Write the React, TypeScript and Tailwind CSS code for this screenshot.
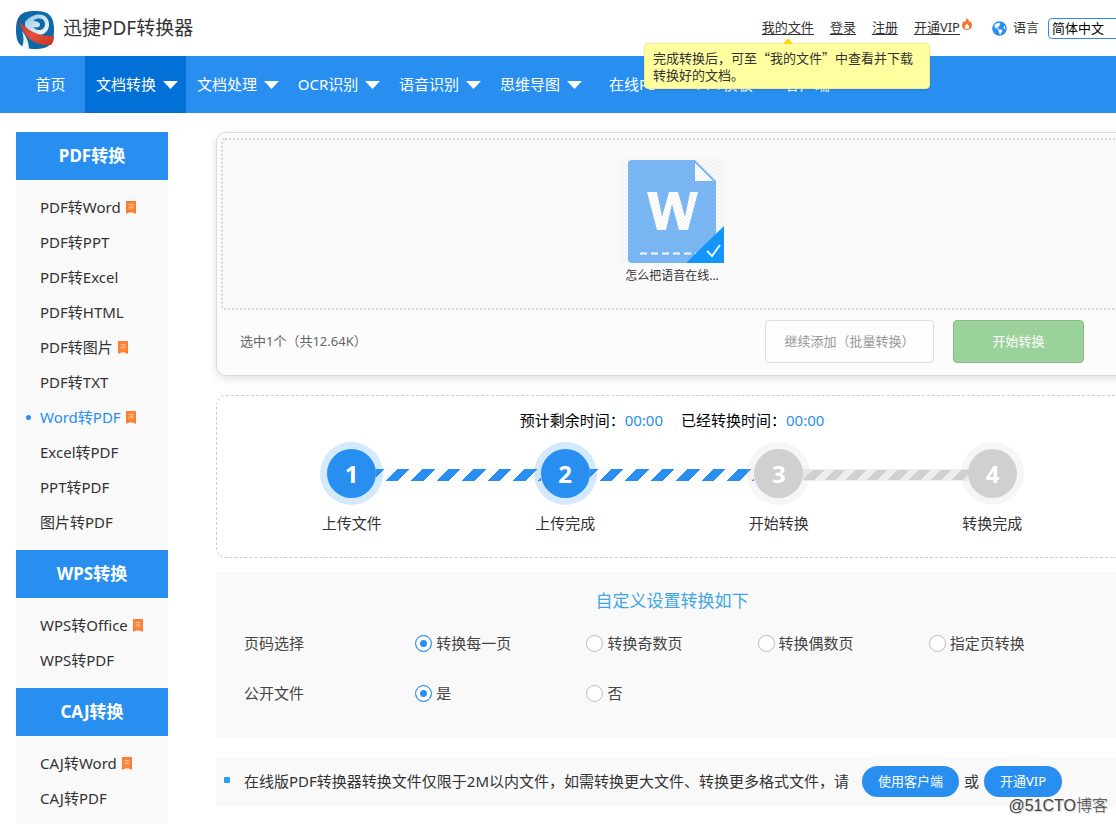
import { FaGlobeAmericas } from "react-icons/fa";

const navItems = ["文档转换", "文档处理", "OCR识别", "语音识别", "思维导图"];

const menu = [
  {
    title: "PDF转换",
    items: [
      { name: "PDF转Word", hot: true },
      { name: "PDF转PPT" },
      { name: "PDF转Excel" },
      { name: "PDF转HTML" },
      { name: "PDF转图片", hot: true },
      { name: "PDF转TXT" },
      { name: "Word转PDF", hot: true, active: true },
      { name: "Excel转PDF" },
      { name: "PPT转PDF" },
      { name: "图片转PDF" },
    ],
  },
  {
    title: "WPS转换",
    items: [{ name: "WPS转Office", hot: true }, { name: "WPS转PDF" }],
  },
  {
    title: "CAJ转换",
    items: [{ name: "CAJ转Word", hot: true }, { name: "CAJ转PDF" }],
  },
];

const steps = [
  { label: "上传文件", done: true },
  { label: "上传完成", done: true },
  { label: "开始转换", done: false },
  { label: "转换完成", done: false },
];

const settings = [
  { label: "页码选择", name: "pages", options: ["转换每一页", "转换奇数页", "转换偶数页", "指定页转换"] },
  { label: "公开文件", name: "public", options: ["是", "否"] },
];

function Logo() {
  return (
    <svg viewBox="0 0 38 38" className="mt-1 size-[38px] shrink-0" aria-hidden="true">
      <defs>
        <linearGradient id="swoosh" x1="0" y1="0" x2="1" y2="1">
          <stop offset="0" stopColor="#b93222" />
          <stop offset="0.5" stopColor="#e8503a" />
          <stop offset="1" stopColor="#c23221" />
        </linearGradient>
        <linearGradient id="ring" x1="0" y1="0" x2="1" y2="1">
          <stop offset="0" stopColor="#8cc6e6" />
          <stop offset="1" stopColor="#ffffff" />
        </linearGradient>
      </defs>
      <path d="M19 0C33 0 38 5 38 19S33 38 19 38 0 33 0 19 5 0 19 0Z" fill="#0d68a8" />
      <path d="M9 11C13 6 18 3.500 23 3.500c7 0 10 5 10 10C33 20 28 24 22 24c-5 0-10-4-13-9Z" fill="url(#ring)" />
      <path d="M17 10C19 8 21 7.500 23.500 7.500c4 0 5.500 3 5.500 6 0 3.500-3 5.500-6 5.500-2.500 0-4.500-1-5.500-3 4 1 6.500 0 6.500-2.500 0-2-3-3.500-7-3.500Z" fill="#0d68a8" />
      <path d="M6 20c4 5 7 11 7 18-3 0-5-.5-7-2C8 31 8 26 6 20Z" fill="#eaf5fc" />
      <path d="M2.500 9C9 17 18 25 38 25c0 4-1 7-3 9C20 35 8 28 2.500 9Z" fill="url(#swoosh)" />
    </svg>
  );
}

function Caret() {
  return (
    <svg viewBox="0 0 15 8" className="h-2 w-[15px] shrink-0" aria-hidden="true">
      <path d="M0 0h15L7.5 8Z" fill="currentColor" />
    </svg>
  );
}

function Flame() {
  return (
    <svg viewBox="0 0 10 12" className="mb-2 ml-0.5 h-3 w-2.5" aria-hidden="true">
      <path d="M4.500 0C7 1.500 7 3 7.300 4.200L8.300 3C9.400 4.500 10 6 10 7.300 10 10 8 12 5 12S0 10 0 7.300C0 5.500 1 4.500 1.600 3l1 1.300C3.500 3 4.700 2 4.500 0Z" fill="#f4772c" />
      <path d="M5.200 5.500c.3 1.500 2 2 2 3.500S6.300 11 5 11 2.800 10.200 2.800 9s1-1.500 2.400-3.500Z" fill="#fff" />
    </svg>
  );
}

function HotTag() {
  return (
    <svg viewBox="0 0 10 13" className="ml-[5px] h-[13px] w-2.5 shrink-0" aria-hidden="true">
      <path d="M0 0h10v13L8 12Q5 10.500 2 12L0 13Z" fill="#fb8034" />
      <path d="M2.500 3.500h5M4 2.700v1.500M6 2.700v1.500M4 5.200h3.500M3.200 5v3.500M4.500 6.500h3M6 6.500v2.300" stroke="#fff" strokeOpacity="0.7" strokeWidth="0.600" fill="none" />
    </svg>
  );
}

function WordFile() {
  return (
    <svg viewBox="0 0 104 104" className="size-[104px]" aria-hidden="true">
      <defs>
        <pattern id="checks" width="4" height="4" patternUnits="userSpaceOnUse">
          <path d="M0 0h2v2H0ZM2 2h2v2H2Z" fill="#000" fillOpacity="0.035" />
        </pattern>
      </defs>
      <path d="M12 1h63l21 21v82H12a4 4 0 0 1-4-4V5a4 4 0 0 1 4-4Z" fill="#7cb9f7" />
      <path d="M75 4v18h18Z" fill="#fff" />
      <path d="M27 33h10l5 25 7-25h9l7 25 5-25h8L68 71h-9l-7-26-6 26h-9Z" fill="#fff" />
      <path d="M20 94.500h56" stroke="#fff" strokeWidth="2" strokeDasharray="7 4" />
      <path d="M0 0h104v104H0Z" fill="url(#checks)" />
      <path d="M104 67v37H66Z" fill="#1296fb" />
      <path d="M87 92l5 5 8-11" fill="none" stroke="#fff" strokeWidth="1.800" />
    </svg>
  );
}

function Header() {
  return (
    <header className="relative">
      <div className="-mr-3 flex h-14 items-center justify-between pl-4">
        <a href="#" className="flex items-center gap-[9px] text-[19px] text-[#333]">
          <Logo />
          迅捷PDF转换器
        </a>
        <div className="flex items-center text-[13px] text-[#333]">
          <nav className="flex items-center gap-4 underline underline-offset-2">
            <a href="#" className="relative">
              我的文件
              <span className="absolute top-full left-1/2 z-20 -ml-[5px] border-x-5 border-b-6 border-x-transparent border-b-[#ffd700]" />
            </a>
            <a href="#">登录</a>
            <a href="#">注册</a>
            <a href="#" className="flex items-center">
              开通VIP
              <Flame />
            </a>
          </nav>
          <FaGlobeAmericas className="mr-1.5 ml-5 size-[15px] text-[#288ff0]" />
          <label htmlFor="lang">语言</label>
          <select
            id="lang"
            className="ml-[9px] h-[21px] w-20 appearance-none rounded border border-[#288ff0] bg-white pl-[3px] leading-none text-black"
          >
            <option>简体中文</option>
          </select>
        </div>
      </div>

      <nav className="flex h-[57px] items-stretch overflow-hidden bg-[#288ff0] pl-4 text-[15px] whitespace-nowrap text-white">
        <a href="#" className="flex w-[69px] items-center justify-center">
          首页
        </a>
        {navItems.map((item, i) => (
          <a
            key={item}
            href="#"
            className={`flex w-[101px] items-center justify-center gap-[7px] pl-[3px] ${i === 0 ? "bg-[#0270d7]" : ""}`}
          >
            {item}
            <Caret />
          </a>
        ))}
        <div className="flex items-center pl-[19px]">
          <a href="#">在线PS</a>
          <a href="#" className="ml-10">
            PPT模板
          </a>
          <a href="#" className="ml-8 flex items-center gap-[7px]">
            客户端
            <Caret />
          </a>
        </div>
      </nav>

      <div
        role="tooltip"
        className="absolute top-[43px] right-[186px] z-10 w-[286px] rounded border border-[#f5ee8a] bg-[#ffff9f] px-2 py-[5px] font-['Noto_Sans_CJK_SC',sans-serif] text-[13px] leading-[17px] text-[#333] shadow-sm"
      >
        完成转换后，可至“我的文件”中查看并下载转换好的文档。
      </div>
    </header>
  );
}

function Sidebar() {
  return (
    <aside className="w-[152px] shrink-0 bg-[#f9f9f9]">
      {menu.map((group) => (
        <section key={group.title} className="group">
          <h2 className="flex h-12 items-center justify-center bg-[#288ff0] text-[17px] font-bold text-white">
            {group.title}
          </h2>
          <ul className="py-2.5 group-last:pb-2">
            {group.items.map((item) => (
              <li key={item.name}>
                <a
                  href="#"
                  className={`flex h-[35px] items-center text-[15px] ${item.active ? "text-[#288ff0]" : "text-[#333]"}`}
                >
                  <span className="flex w-6 justify-center">
                    {item.active && <span className="size-[5px] rounded-full bg-[#288ff0]" />}
                  </span>
                  {item.name}
                  {item.hot && <HotTag />}
                </a>
              </li>
            ))}
          </ul>
        </section>
      ))}
    </aside>
  );
}

function UploadPanel() {
  return (
    <section className="rounded-[10px] border border-[#ddd] bg-[#fcfcfc] p-1 pb-3 shadow-[0_3px_8px_rgba(0,0,0,0.12)]">
      <div className="mt-px flex h-[172px] flex-col items-center rounded border-2 border-dotted border-[#d6d6d6] bg-[#fafafa] pt-[19px]">
        <WordFile />
        <p className="mt-[5px] text-xs text-[#333]">怎么把语音在线...</p>
      </div>
      <div className="mt-2.5 flex h-[43px] items-center pr-[39px] pl-[19px] text-[13px]">
        <span className="mr-auto text-[#666]">选中1个（共12.64K）</span>
        <button className="h-full w-[169px] rounded border border-[#ddd] bg-[#fdfdfd] text-[#999]">
          继续添加（批量转换）
        </button>
        <button className="ml-[19px] h-full w-[131px] rounded border border-[#87bd87] bg-[#9bd29b] text-white">
          开始转换
        </button>
      </div>
    </section>
  );
}

function Steps() {
  return (
    <section className="mt-[19px] rounded-[10px] border border-dashed border-[#ccc] pt-3.5 pb-6 text-[15px] leading-5">
      <p className="flex justify-center gap-[18px] text-black">
        <span>
          预计剩余时间：<span className="text-[#288ff0]">00:00</span>
        </span>
        <span>
          已经转换时间：<span className="text-[#288ff0]">00:00</span>
        </span>
      </p>
      <div className="mt-3 flex items-center px-[103px]">
        {steps.map((step, i) => (
          <div key={step.label} className={`flex items-center ${i > 0 ? "flex-1" : ""}`}>
            {i > 0 && (
              <div
                className={`-mx-[7px] mt-0.5 h-3 flex-1 ${
                  i < 3
                    ? "bg-[repeating-linear-gradient(135deg,#288ff0_0_6px,#fafafa_6px_15px,#288ff0_15px_18px)]"
                    : "border-y border-[#eee] bg-[repeating-linear-gradient(135deg,#eee_0_7px,#d0d0d0_7px_15px)]"
                }`}
              />
            )}
            <div
              className={`relative flex size-[63px] shrink-0 items-center justify-center rounded-full ${
                step.done ? "bg-[#288ff0]/20" : "bg-[#d0d0d0]/20"
              }`}
            >
              <span
                className={`flex size-[49px] items-center justify-center rounded-full text-2xl font-bold text-white ${
                  step.done ? "bg-[#288ff0]" : "bg-[#d0d0d0]"
                }`}
              >
                {i + 1}
              </span>
            </div>
          </div>
        ))}
      </div>
      <div className="mt-2 grid grid-cols-4 px-7 text-center text-[#333]">
        {steps.map((step) => (
          <span key={step.label}>{step.label}</span>
        ))}
      </div>
    </section>
  );
}

function Settings() {
  return (
    <section className="mt-3.5 bg-[#f9f9f9] px-7 pt-4 pb-5 text-[15px] text-[#444]">
      <h3 className="text-center text-[17px] leading-[26px] text-[#42a5e8]">自定义设置转换如下</h3>
      <div className="mt-1">
        {settings.map((row) => (
          <div key={row.name} role="radiogroup" aria-label={row.label} className="grid h-[50px] grid-cols-5 items-center">
            <span>{row.label}</span>
            {row.options.map((option, i) => (
              <label key={option} className="flex items-center gap-1">
                <input
                  type="radio"
                  name={row.name}
                  defaultChecked={i === 0}
                  className="size-[17px] appearance-none rounded-full border border-[#bbb] bg-white checked:border-[#288ff0] checked:bg-[#288ff0] checked:shadow-[inset_0_0_0_4px_white]"
                />
                {option}
              </label>
            ))}
          </div>
        ))}
      </div>
    </section>
  );
}

function Notice() {
  return (
    <section className="mt-[19px] flex h-[49px] items-center bg-[#f9f9f9] pl-2 text-[15px] whitespace-nowrap text-[#333]">
      <span className="mr-3.5 mb-1 size-1.5 rounded-[1px] bg-[#2b9cf0]" />
      <span className="mr-2">在线版PDF转换器转换文件仅限于2M以内文件，如需转换更大文件、转换更多格式文件，请</span>
      <a href="#" className="mx-[5px] rounded-full bg-[#288ff0] px-4 text-[13px] leading-[31px] text-white">
        使用客户端
      </a>
      或
      <a href="#" className="mx-[5px] rounded-full bg-[#288ff0] px-4 text-[13px] leading-[31px] text-white">
        开通VIP
      </a>
    </section>
  );
}

export default function App() {
  return (
    <div className="relative overflow-hidden bg-white font-['Noto_Sans','Noto_Sans_CJK_SC',sans-serif]">
      <Header />
      <div className="-mr-3 flex items-start gap-12 pt-[19px] pl-4">
        <Sidebar />
        <main className="min-w-0 flex-1">
          <UploadPanel />
          <Steps />
          <Settings />
          <Notice />
        </main>
      </div>
      <span className="absolute right-2 bottom-1.5 font-['Liberation_Sans','Noto_Sans_CJK_SC',sans-serif] text-base font-light text-[#444] [text-shadow:1px_1px_1px_#ccc]">
        @51CTO博客
      </span>
    </div>
  );
}
